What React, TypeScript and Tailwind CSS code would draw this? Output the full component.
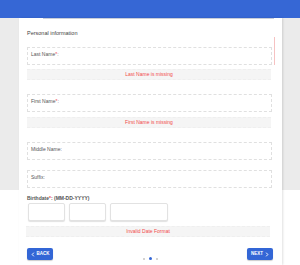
import React from "react";

const font = { fontFamily: '"Liberation Sans", Arial, sans-serif' };

function Input({ label, required }: { label: string; required?: boolean }) {
  return (
    <div className="h-[18px] border border-dashed border-[#e0e0e0] bg-white px-[3px] pt-[3px] text-[5px] leading-[6px] text-[#555]">
      {label.replace(":", "")}
      {required && <span className="text-[#f04848]">*</span>}:
    </div>
  );
}

function ErrorBox({ text }: { text: string }) {
  return (
    <div className="flex h-[11px] items-center justify-center border-y border-dashed border-[#efefef] bg-[#f5f5f5] text-[5px] text-[#f24a4a]">
      {text}
    </div>
  );
}

function Chevron({ dir }: { dir: "l" | "r" }) {
  return (
    <svg width="4" height="5" viewBox="0 0 4 6" className="shrink-0">
      <path
        d={dir === "l" ? "M3 0.8 L1 3 L3 5.2" : "M1 0.8 L3 3 L1 5.2"}
        stroke="white"
        strokeWidth="1.1"
        fill="none"
      />
    </svg>
  );
}

export default function App() {
  return (
    <div className="w-[300px] h-[265px] overflow-hidden bg-white" style={font}>
      <div className="h-[18px] bg-[#3667d5]" />
      <div className="h-[247px] bg-[linear-gradient(#ebebeb_172px,#ffffff_172px)]">
        <div className="ml-[19px] h-[247px] w-[263px] bg-white shadow-[1px_0_2px_rgba(0,0,0,0.12)]">
          <div className="ml-[24px] h-px w-[231px] bg-[#c9ced9]" />
          <div className="px-[8px]">
            <div className="mt-[10px] text-[5.5px] leading-[8px] text-[#444]">Personal information</div>
            <div className="relative mt-[10px] w-[245px]">
              <Input label="Last Name:" required />
              <div className="absolute left-[247px] top-[-10px] h-[28px] w-px bg-[#f6c2c2]" />
            </div>
            <div className="mt-[4px] w-[244px]">
              <ErrorBox text="Last Name is missing" />
            </div>
            <div className="mt-[14px] w-[245px]">
              <Input label="First Name:" required />
            </div>
            <div className="mt-[5px] w-[244px]">
              <ErrorBox text="First Name is missing" />
            </div>
            <div className="mt-[14px] w-[245px]">
              <Input label="Middle Name:" />
            </div>
            <div className="mt-[10px] w-[245px]">
              <Input label="Suffix:" />
            </div>
            <div className="mt-[7px] text-[5px] font-bold leading-[6px] text-[#555]">
              Birthdate<span className="text-[#f04848]">*</span>: (MM-DD-YYYY)
            </div>
            <div className="mt-[2px] flex gap-[4px] pl-[1px]">
              <div className="h-[18px] w-[37px] rounded-[2px] border border-[#e2e2e2] bg-white shadow-[0_1px_1px_rgba(0,0,0,0.12)]" />
              <div className="h-[18px] w-[37px] rounded-[2px] border border-[#e2e2e2] bg-white shadow-[0_1px_1px_rgba(0,0,0,0.12)]" />
              <div className="h-[18px] w-[58px] rounded-[2px] border border-[#e2e2e2] bg-white shadow-[0_1px_1px_rgba(0,0,0,0.12)]" />
            </div>
            <div className="mt-[5px] ml-[-1px] w-[244px]">
              <ErrorBox text="Invalid Date Format" />
            </div>
            <div className="mt-[11px] flex w-[246px] items-start justify-between">
              <button className="flex h-[12px] w-[26px] items-center justify-center gap-[2px] rounded-[2px] bg-[#3366d6] text-[4.5px] font-bold text-white shadow-[0_1px_1px_rgba(0,0,0,0.2)]">
                <Chevron dir="l" />
                BACK
              </button>
              <div className="mt-[9px] flex items-center gap-[4px]">
                <div className="h-[2px] w-[2px] rounded-full bg-[#c4c4c4]" />
                <div className="h-[3px] w-[3px] rounded-full bg-[#3366d6]" />
                <div className="h-[2px] w-[2px] rounded-full bg-[#c4c4c4]" />
              </div>
              <button className="flex h-[12px] w-[26px] items-center justify-center gap-[2px] rounded-[2px] bg-[#3366d6] text-[4.5px] font-bold text-white shadow-[0_1px_1px_rgba(0,0,0,0.2)]">
                NEXT
                <Chevron dir="r" />
              </button>
            </div>
          </div>
        </div>
      </div>
    </div>
  );
}
